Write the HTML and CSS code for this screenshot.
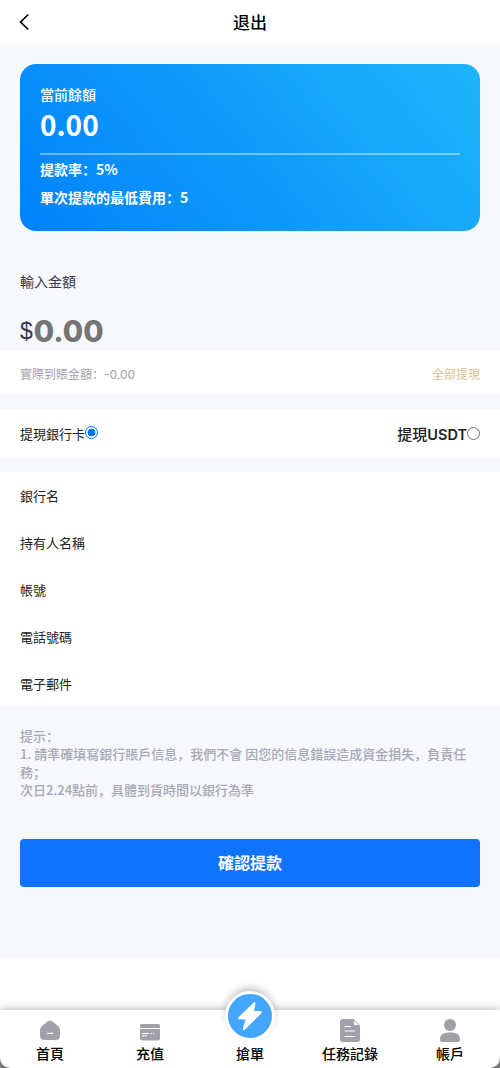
FILE: index.html
```html
<!DOCTYPE html>
<html lang="zh-CN">
<head>
<meta charset="utf-8">
<title>退出</title>
<link rel="stylesheet" href="styles.css">
</head>
<body>
<header class="topbar">
  <svg class="back" width="12" height="18" viewBox="0 0 12 18"><path d="M9.300 1.500 1.600 9l7.700 7.500" fill="none" stroke="#000" stroke-width="1.700"/></svg>
  <h1 class="title">退出</h1>
</header>
<main class="page">
  <section class="balance">
    <div class="balance-label">當前餘額</div>
    <div class="balance-value">0.00</div>
    <div class="balance-note">提款率：5%</div>
    <div class="balance-note">單次提款的最低費用：5</div>
  </section>
  <section class="amount">
    <div class="amount-label">輸入金額</div>
    <div class="amount-field"><span class="currency">$</span><span class="amount-value">0.00</span></div>
  </section>
  <section class="actual"><span>實際到賬金額：<span class="wide">-0.00</span></span><span class="all">全部提現</span></section>
  <section class="methods">
    <label class="method">提現銀行卡<span class="radio checked"></span></label>
    <label class="method usdt">提現<b class="coin">USDT</b><span class="radio"></span></label>
  </section>
  <section class="fields">
    <div class="field">銀行名</div>
    <div class="field">持有人名稱</div>
    <div class="field">帳號</div>
    <div class="field">電話號碼</div>
    <div class="field">電子郵件</div>
  </section>
  <section class="tips">提示：<br>1. 請準確填寫銀行賬戶信息，我們不會 因您的信息錯誤造成資金損失，負責任務；<br>次日2.24點前，具體到貨時間以銀行為準</section>
  <button class="submit">確認提款</button>
</main>
<div class="nav-space"></div>
<div class="nav-wrap">
<nav class="nav">
  <a class="item"><svg class="icon" width="24" height="24" viewBox="0 0 24 24"><path d="M9.500 3.500Q12 1.500 14.500 3.500L20.300 8.300Q22 9.800 22 12V17.500Q22 22 17.500 22H6.500Q2 22 2 17.500V12Q2 9.800 3.700 8.300Z" fill="#a2a0a8"/><path d="M9.300 15.300h5.400" stroke="#fff" stroke-width="1.300" stroke-linecap="round"/></svg>首頁</a>
  <a class="item"><svg class="icon" width="24" height="24" viewBox="0 0 24 24"><path d="M2 10V7.500Q2 6 3.500 6h17Q22 6 22 7.500V10zM2 11h20v9.500Q22 22.500 20 22.500H4Q2 22.500 2 20.500z" fill="#a2a0a8"/><path d="M4 15.500h7M12.500 15.500h1.500M15 15.500h1M4 17.800h5" stroke="#fff" stroke-width="1"/></svg>充值</a>
  <a class="item"><span class="bolt"><svg width="44" height="44" viewBox="0 0 44 44"><path d="M25.800 8.500 10.300 23.500Q9.100 25 10.900 25.200L17.500 25.500 14.800 35Q15 36.800 16.500 36L33.500 19.200Q34.800 17.500 32.800 17.200L26 16.800 27.500 9.500Q27.500 7.300 25.800 8.500Z" fill="#fff"/></svg></span>搶單</a>
  <a class="item"><svg class="icon" width="24" height="24" viewBox="0 0 24 24"><path d="M5 1H15.500L22 7.500V21Q22 24 19 24H5Q2 24 2 21V4Q2 1 5 1Z" fill="#a2a0a8"/><path d="M15.800 2.600V5.500Q15.800 7 17.300 7H20.600Z" fill="#fff"/><path d="M7 8.500h5.500M7 13h9.500M7 18.500h9.500" stroke="#fff" stroke-width="1" stroke-linecap="round"/></svg>任務記錄</a>
  <a class="item"><svg class="icon" width="24" height="24" viewBox="0 0 24 24"><circle cx="12" cy="7" r="6" fill="#a2a0a8"/><path d="M2 21Q2 14.500 10 14.500H14Q22 14.500 22 21V21.500Q22 24 19.500 24H4.500Q2 24 2 21.500Z" fill="#a2a0a8"/></svg>帳戶</a>
</nav>
</div>
</body>
</html>
```
FILE: styles.css
```css
* { box-sizing: border-box; }
body { margin: 0; height: 1068px; overflow: hidden; display: flex; flex-direction: column; background: #fff; color: #222; font-family: "Noto Sans CJK SC", sans-serif; font-size: 13px; }
.topbar { height: 44px; flex: none; display: grid; grid-template-columns: 40px 1fr 40px; align-items: center; }
.back { margin-left: 19px; }
.title { margin: 0; font-size: 17px; font-weight: 500; line-height: 42px; text-align: center; color: #000; }
.page { height: 913px; flex: none; padding-top: 20px; background: #f6f8fc; }
.balance { height: 167px; margin: 0 20px; padding: 20px; border-radius: 16px; color: #fff; font-weight: 500; font-size: 14px; background: linear-gradient(50deg, #0082fa, #1fb5fb); }
.balance-label { line-height: 20px; }
.balance-value { height: 51px; line-height: 41px; font-size: 28px; font-weight: 700; border-bottom: 2px solid rgba(255,255,255,.4); }
.balance-note { line-height: 28px; font-weight: 700; }
.amount { height: 120px; padding: 40px 20px 0; color: #363853; }
.amount-label { font-size: 14px; line-height: 20px; }
.amount-field { display: flex; align-items: center; height: 36px; margin-top: 22px; }
.currency { font: 23px/36px "Liberation Sans", sans-serif; }
.amount-value { margin-left: 1px; font: 800 29.500px/36px Inter, sans-serif; color: #757575; }
.actual { height: 44px; padding: 2px 20px 0; display: flex; align-items: center; justify-content: space-between; background: #fff; color: #a2a0a8; font-size: 12px; line-height: 46px; }
.wide { font-family: Inter, sans-serif; }
.all { color: #dcbe91; }
.methods { height: 49px; margin: 14px 0; padding: 0 20px; display: flex; align-items: center; justify-content: space-between; background: #fff; }
.method { display: flex; align-items: center; line-height: 49px; }
.usdt { font-size: 15px; font-weight: 500; }
.coin { font: 600 14.500px/50px Inter, sans-serif; padding-top: 2px; }
.radio { width: 13px; height: 13px; border: 1px solid #767676; border-radius: 50%; background: #fff; }
.checked { border-color: #0075ff; background: radial-gradient(circle, #0075ff 3.600px, #fff 4.200px); margin-bottom: 3px; }
.fields { background: #fff; padding: 0 20px; }
.field { height: 47px; line-height: 47px; }
.tips { height: 132px; padding: 20px 20px 0; margin: 0; color: #a7a9b6; font-weight: 500; line-height: 18px; }
.submit { display: block; width: 460px; height: 48px; margin: 0 20px; padding: 0 0 3px; border: 0; border-radius: 4px; background: #0f73ff; color: #fff; font: 700 16px/44px "Noto Sans CJK SC", sans-serif; }
.nav-space { height: 53px; flex: none; }
.nav-wrap { height: 58px; flex: none; background: linear-gradient(to bottom, transparent 70%, #888 70%); }
.nav { height: 58px; display: grid; grid-template-columns: repeat(5, 1fr); background: #fff; border-radius: 0 0 10px 10px; box-shadow: 0 0 10px rgba(0,0,0,.35); }
.item { display: flex; flex-direction: column; align-items: center; height: 58px; padding-top: 8px; color: #000; font-size: 14px; font-weight: 500; line-height: 22px; }
.icon { display: block; flex: none; overflow: visible; }
.bolt { flex: none; width: 50px; height: 50px; margin: -27px 0 1px; border-radius: 50%; border: 3px solid #fff; background: #43a5fd; box-shadow: 0 -4px 8px -2px rgba(0,0,0,.3); }
.bolt svg { display: block; }
```
